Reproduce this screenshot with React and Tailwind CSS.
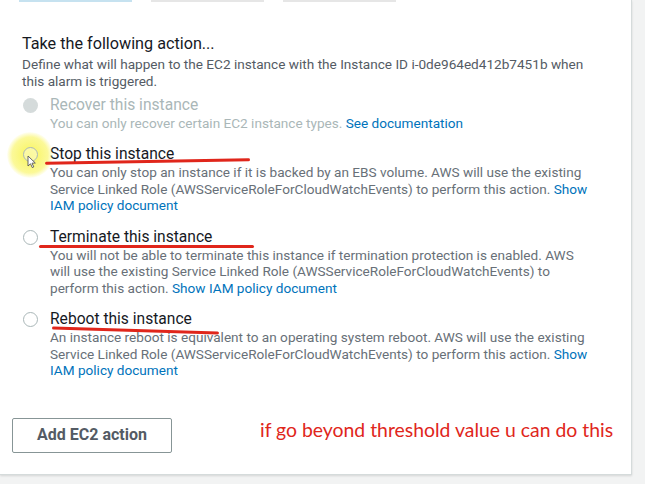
import React from 'react';

const options = [
  {
    label: 'Recover this instance',
    disabled: true,
    text: 'You can only recover certain EC2 instance types. ',
    link: 'See documentation',
  },
  {
    label: 'Stop this instance',
    highlight: true,
    text: 'You can only stop an instance if it is backed by an EBS volume. AWS will use the existing Service Linked Role (AWSServiceRoleForCloudWatchEvents) to perform this action. ',
    link: 'Show IAM policy document',
  },
  {
    label: 'Terminate this instance',
    text: 'You will not be able to terminate this instance if termination protection is enabled. AWS will use the existing Service Linked Role (AWSServiceRoleForCloudWatchEvents) to perform this action. ',
    link: 'Show IAM policy document',
  },
  {
    label: 'Reboot this instance',
    text: 'An instance reboot is equivalent to an operating system reboot. AWS will use the existing Service Linked Role (AWSServiceRoleForCloudWatchEvents) to perform this action. ',
    link: 'Show IAM policy document',
  },
];

function Radio({ disabled, highlight }) {
  return (
    <div className="relative w-[15px] h-[15px] shrink-0 mt-[2px]">
      {highlight && (
        <div className="absolute left-[-16px] top-[-15px] w-[46px] h-[46px] rounded-full bg-[radial-gradient(circle,rgba(248,244,80,0.95)_0%,rgba(250,246,110,0.7)_55%,rgba(255,255,255,0)_72%)]" />
      )}
      <div
        className={
          disabled
            ? 'relative w-[15px] h-[15px] rounded-full bg-[#d5dbdb]'
            : 'relative w-[15px] h-[15px] rounded-full border border-[#aab7b8] bg-white/40'
        }
      />
      {highlight && (
        <svg className="absolute left-[4px] top-[8px]" width="10" height="14" viewBox="0 0 10 14">
          <path d="M1 1 L1 11 L3.5 8.8 L5.3 12.6 L6.8 11.9 L5 8.2 L8.3 8 Z" fill="white" stroke="#555" strokeWidth="0.9" />
        </svg>
      )}
    </div>
  );
}

export default function App() {
  return (
    <div className="w-[645px] h-[484px] bg-[#f2f3f3] overflow-hidden" style={{ fontFamily: 'Roboto, "Liberation Sans", sans-serif' }}>
      <div className="relative w-[632px] h-[475px] bg-white border-r border-b border-[#d5dbdb] shadow-[0_1px_2px_rgba(0,0,0,0.12)] px-[12px]">
        {/* bottoms of the tiles above */}
        <div className="flex gap-[19px] pl-[7px]">
          <div className="w-[113px] h-[2px] bg-[#c6e2f0]" />
          <div className="w-[113px] h-[2px] bg-[#e6e6e6]" />
          <div className="w-[113px] h-[2px] bg-[#e6e6e6]" />
        </div>

        <div className="pl-[10px] pt-[32px]">
          <h2 className="text-[16.2px] leading-[20px] text-[#16191f]">Take the following action...</h2>
          <p className="mt-[2px] w-[580px] text-[13.6px] leading-[16.5px] text-[#545b64]">
            Define what will happen to the EC2 instance with the Instance ID i-0de964ed412b7451b when this alarm is triggered.
          </p>

          <div className="mt-[6.5px] flex flex-col gap-[14px]">
            {options.map((o) => (
              <div key={o.label} className="flex gap-[12px] pl-[1px]">
                <Radio disabled={o.disabled} highlight={o.highlight} />
                <div className="w-[544px]">
                  <div className={`text-[15.6px] leading-[19px] ${o.disabled ? 'text-[#aab7b8]' : 'text-[#16191f]'}`}>
                    {o.label}
                  </div>
                  <div className={`text-[13.6px] leading-[16.5px] ${o.disabled ? 'text-[#aab7b8]' : 'text-[#687078]'}`}>
                    {o.text}
                    <span className="text-[#0073bb]">{o.link}</span>
                  </div>
                </div>
              </div>
            ))}
          </div>
        </div>

        <div className="mt-[39px] flex items-start">
          <button className="w-[160px] h-[35px] border border-[#879596] rounded-[2px] bg-white text-[16px] font-bold text-[#545b64]">
            Add EC2 action
          </button>
          <span className="ml-[88px] mt-[-3px] whitespace-nowrap text-[19.4px] text-[#e0261b]" style={{ fontFamily: 'Lato, "Open Sans", sans-serif' }}>
            if go beyond threshold value u can do this
          </span>
        </div>

        {/* red annotation underlines */}
        <div className="absolute left-[45px] top-[160px] w-[205px] h-[3px] bg-[#e0261b] rounded-full -rotate-1" />
        <div className="absolute left-[39px] top-[245px] w-[215px] h-[3px] bg-[#e0261b] rounded-full" />
        <div className="absolute left-[52px] top-[329px] w-[167px] h-[3px] bg-[#e0261b] rounded-full rotate-[1.7deg]" />
      </div>
    </div>
  );
}
